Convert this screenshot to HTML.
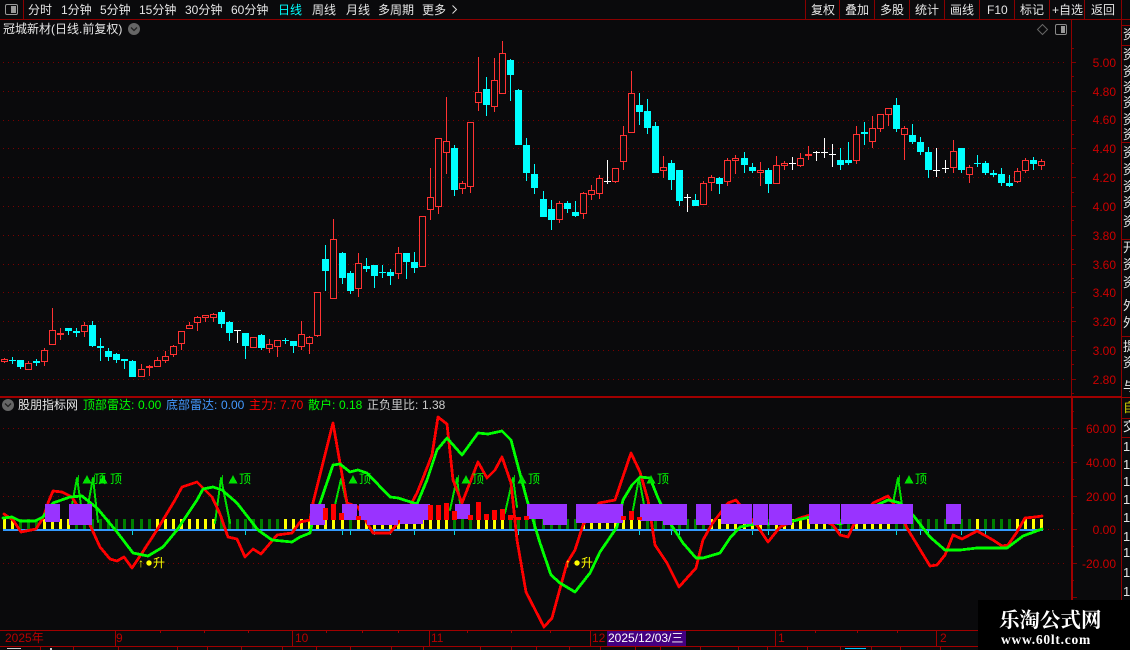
<!DOCTYPE html>
<html lang="zh"><head><meta charset="utf-8"><title>冠城新材</title>
<style>
html,body{margin:0;padding:0;background:#0a0a0c;}
#r{position:relative;width:1130px;height:650px;overflow:hidden;background:#0a0a0c;font:12px/14px "Liberation Sans","WenQuanYi Zen Hei","Noto Sans CJK SC",sans-serif;color:#e6e6e6;}
#r svg{position:absolute;left:0;top:0;shape-rendering:crispEdges;}
.t{position:absolute;white-space:nowrap;}
.g{color:#00ff00}.b{color:#4499ff}.e{color:#ff0000}.y{color:#ffff00}.a{color:#c00000}.d{color:#b80000;}
.rt{position:absolute;left:1075px;width:41px;text-align:right;color:#cc0000;}
.s{position:absolute;left:1123px;width:7px;overflow:hidden;white-space:nowrap;color:#e6e6e6;font-size:13px;}
</style></head><body><div id="r">
<svg id="c" width="1130" height="650" xmlns="http://www.w3.org/2000/svg"></svg>

<span class="t" style="left:28px;top:3px">分时</span>
<span class="t" style="left:61px;top:3px">1分钟</span>
<span class="t" style="left:100px;top:3px">5分钟</span>
<span class="t" style="left:139px;top:3px">15分钟</span>
<span class="t" style="left:185px;top:3px">30分钟</span>
<span class="t" style="left:231px;top:3px">60分钟</span>
<span class="t" style="left:278px;top:3px;color:#00ffff">日线</span>
<span class="t" style="left:312px;top:3px">周线</span>
<span class="t" style="left:346px;top:3px">月线</span>
<span class="t" style="left:378px;top:3px">多周期</span>
<span class="t" style="left:422px;top:3px">更多</span>

<span class="t" style="left:811px;top:3px">复权</span>
<span class="t" style="left:845px;top:3px">叠加</span>
<span class="t" style="left:880px;top:3px">多股</span>
<span class="t" style="left:915px;top:3px">统计</span>
<span class="t" style="left:950px;top:3px">画线</span>
<span class="t" style="left:987px;top:3px">F10</span>
<span class="t" style="left:1020px;top:3px">标记</span>
<span class="t" style="left:1052px;top:3px">+自选</span>
<span class="t" style="left:1091px;top:3px">返回</span>

<span class="t" style="left:3px;top:22px">冠城新材(日线.前复权)</span>

<span class="rt" style="top:56px">5.00</span>
<span class="rt" style="top:85px">4.80</span>
<span class="rt" style="top:113px">4.60</span>
<span class="rt" style="top:142px">4.40</span>
<span class="rt" style="top:171px">4.20</span>
<span class="rt" style="top:200px">4.00</span>
<span class="rt" style="top:229px">3.80</span>
<span class="rt" style="top:258px">3.60</span>
<span class="rt" style="top:286px">3.40</span>
<span class="rt" style="top:315px">3.20</span>
<span class="rt" style="top:344px">3.00</span>
<span class="rt" style="top:373px">2.80</span>

<span class="s" style="top:28px">资</span><span class="s" style="top:48px">资</span><span class="s" style="top:65px">资</span><span class="s" style="top:81px">资</span><span class="s" style="top:96px">资</span><span class="s" style="top:113px">资</span><span class="s" style="top:128px">资</span>
<span class="s" style="top:146px">资</span><span class="s" style="top:163px">资</span><span class="s" style="top:180px">资</span><span class="s" style="top:196px">资</span><span class="s" style="top:215px">资</span>
<span class="s" style="top:241px">开</span><span class="s" style="top:258px">资</span><span class="s" style="top:276px">资</span><span class="s" style="top:299px">外</span><span class="s" style="top:316px">外</span>
<span class="s" style="top:340px">提</span><span class="s" style="top:356px">资</span><span class="s" style="top:380px">与</span>
<span class="s y" style="top:401px;color:#cccc00">自</span><span class="s" style="top:420px">交</span>
<span class="s" style="top:440px">1</span><span class="s" style="top:458px">1</span><span class="s" style="top:475px">1</span><span class="s" style="top:493px">1</span><span class="s" style="top:511px">1</span><span class="s" style="top:530px">1</span><span class="s" style="top:546px">1</span><span class="s" style="top:566px">1</span><span class="s" style="top:585px">1</span>

<span class="t" style="left:18px;top:398px">股朋指标网</span>
<span class="t g" style="left:83px;top:398px">顶部雷达:</span><span class="t g" style="left:138px;top:398px">0.00</span>
<span class="t b" style="left:166px;top:398px">底部雷达:</span><span class="t b" style="left:221px;top:398px">0.00</span>
<span class="t e" style="left:249px;top:398px">主力:</span><span class="t e" style="left:280px;top:398px">7.70</span>
<span class="t g" style="left:308px;top:398px">散户:</span><span class="t g" style="left:339px;top:398px">0.18</span>
<span class="t" style="left:367px;top:398px;color:#ccc">正负里比:</span><span class="t" style="left:422px;top:398px;color:#ccc">1.38</span>

<span class="t g" style="left:94px;top:472px">顶</span><span class="t g" style="left:110px;top:472px">顶</span>
<span class="t g" style="left:239px;top:472px">顶</span><span class="t g" style="left:359px;top:472px">顶</span>
<span class="t g" style="left:472px;top:472px">顶</span><span class="t g" style="left:528px;top:472px">顶</span>
<span class="t g" style="left:657px;top:472px">顶</span><span class="t g" style="left:915px;top:472px">顶</span>
<span class="t y" style="left:138px;top:556px">↑</span><span class="t y" style="left:153px;top:556px">升</span>
<span class="t y" style="left:565px;top:556px">↑</span><span class="t y" style="left:581px;top:556px">升</span>

<span class="rt" style="left:1070px;width:46px;top:422px">60.00</span>
<span class="rt" style="left:1070px;width:46px;top:456px">40.00</span>
<span class="rt" style="left:1070px;width:46px;top:490px">20.00</span>
<span class="rt" style="left:1070px;width:46px;top:523px">0.00</span>
<span class="rt" style="left:1070px;width:46px;top:557px">-20.00</span>

<span class="t d" style="left:5px;top:631px">2025年</span>
<span class="t d" style="left:116px;top:631px">9</span>
<span class="t d" style="left:295px;top:631px">10</span>
<span class="t d" style="left:431px;top:631px">11</span>
<span class="t d" style="left:592px;top:631px">12</span>
<span class="t" style="left:608px;top:631px;color:#fff">2025/12/03/三</span>
<span class="t d" style="left:778px;top:631px">1</span>
<span class="t d" style="left:940px;top:631px">2</span>

<div style="position:absolute;left:978px;top:600px;width:152px;height:50px;background:#000"></div>
<span class="t" style="left:999px;top:609px;font:bold 20.5px/24px 'Liberation Serif','Noto Serif CJK SC',serif;color:#fff">乐淘公式网</span>
<span class="t" style="left:1001px;top:632px;font:bold 13.5px/15px 'Liberation Serif',serif;color:#fff;letter-spacing:.75px">www.60lt.com</span>
</div>
<script>
(function(){
var o=[];
function rc(x,y,w,h,f){o.push('<rect x="'+x+'" y="'+y+'" width="'+w+'" height="'+h+'" fill="'+f+'"/>');}
var L='#800000';
function dots(y,x2){o.push('<path d="M3 '+(y+.5)+'H'+x2+'" stroke="#7a0000" stroke-width="1" stroke-dasharray="1 4" fill="none"/>');}
var i,y;
for(i=0;i<12;i++){y=Math.round(62+28.8*i);dots(y,1068);rc(1071,y,5,1,L);rc(1071,Math.round(62+28.8*i+14.4),3,1,L);}
rc(1071,Math.round(62-14.4),3,1,L);
[428,462,496,529,563].forEach(function(v){dots(v,1068);});
for(i=-1;i<12;i++){y=Math.round(428+16.9*i);rc(1071,y,(i%2==0?6:3),1,L);}
rc(0,19,1122,1,'#8a0000');rc(23,0,1,19,'#8a0000');
[805,839,874,909,944,979,1014,1049,1084,1121].forEach(function(x){rc(x,0,1,19,'#8a0000');});
rc(1071,20,1,377,'#900000');rc(1071,397,2,233,'#a00000');
rc(1121,19,1,631,'#900000');rc(1122,19,8,1,'#900000');
[25,45,142,239,336,418,437].forEach(function(v){rc(1122,v,8,1,'#900000');});
rc(0,396,1122,2,'#a00000');
rc(1122,397,8,1,'#a00000');
rc(0,630,1122,1,'#a00000');rc(0,646,1122,1,'#a00000');
[115,292,429,590,775,936].forEach(function(x){rc(x,630,1,16,'#a00000');});
[160,204,248,326,362,398,467,511,550,815,857,897,1000,1040].forEach(function(x){rc(x,630,1,3,'#a00000');});
[40,73,118,177,207,241,282,316,350,391,423,480,511,536,569,600,635,660,700,738,767,807,840,871,900,940].forEach(function(x){rc(x,646,1,4,'#a00000');});
rc(607,631,79,15,'#430080');
rc(7,648,14,1,'#ccc');rc(50,648,2,2,'#ccc');rc(845,648,21,1,'#00c8ff');
var A=[['r',415,418,425,428],['c',411,420,423,431],['c',420,420,441,446],['r',424,430,449,449],['c',418,423,429,437],['r',385,391,425,437],['r',264,331,374,374],['f',324,340,344,360],['c',324,324,333,345],['c',324,333,339,351],['r',306,316,335,351],['c',304,315,378,381],['c',354,378,384,423],['c',384,393,411,423],['c',399,402,420,429],['c',417,417,423,447],['c',420,423,471,471],['r',432,448,471,471],['f',435,438,443,468],['r',411,421,440,441],['r',393,409,422,429],['r',376,379,404,411],['r',334,334,372,390],['r',306,316,327,327],['r',288,292,308,333],['r',286,286,293,306],['r',279,283,293,306],['c',270,276,312,324],['c',303,306,339,363],['w',330,331,333,369],['c',339,339,378,417],['r',351,352,384,384],['c',342,345,384,390],['r',357,373,386,399],['r',360,361,380,411],['c',354,360,363,372],['c',363,363,378,399],['r',303,343,380,390],['r',348,352,371,402],['r',217,217,347,351],['c',75,117,153,213],['r',-3,58,236,236],['c',96,99,174,192],['c',153,159,213,222],['r',99,130,206,231],['c',114,138,147,156],['c',135,135,168,204],['c',135,156,159,174],['c',147,156,168,195],['r',81,100,161,177],['c',99,99,126,177],['c',96,126,144,159]];
var B=[['r',559,559,710,710],['r',415,502,539,570],['r',325,325,530,552],['r',201,334,368,432],['c',345,354,480,498],['r',453,460,476,492],['r',277,277,470,489],['r',81,187,218,243],['c',141,177,225,258],['r',84,151,230,246],['r',33,70,191,192],['c',87,90,135,213],['c',177,180,345,345],['c',324,345,429,453],['c',402,432,474,492],['c',483,507,561,561],['c',510,537,570,600],['r',513,520,569,579],['c',513,519,537,549],['c',513,546,558,561],['r',486,490,551,567],['r',465,481,494,510],['r',435,445,491,507],['w',390,454,457,462],['r',414,415,455,459],['r',288,316,395,420],['r',123,190,308,308],['c',189,225,246,285],['c',207,243,294,312],['c',276,288,429,429],['r',378,412,422,444],['c',390,399,450,480],['c',420,420,513,528],['w',492,501,504,546],['c',492,510,528,528],['r',453,460,524,525],['r',435,442,460,483],['c',441,444,462,492],['r',384,391,455,468],['r',375,385,392,432]];
var C=[['c',186,205,225,249],['c',219,231,243,249],['r',216,241,250,288],['c',234,240,282,309],['r',198,226,281,282],['r',213,220,227,240],['w',201,219,221,240],['r',189,205,227,231],['f',168,192,197,210],['w',183,185,187,213],['w',144,186,188,204],['w',162,192,194,231],['c',174,210,225,240],['c',156,210,219,225],['r',108,133,212,222],['c',96,126,132,165],['r',78,115,155,174],['r',72,73,116,126],['r',54,55,74,108],['c',24,45,117,126],['r',108,115,134,210],['c',102,135,156,162],['c',141,156,186,195],['c',171,186,240,264],['w',174,240,243,261],['w',210,234,236,249],['r',150,184,233,249],['c',174,174,240,249],['r',225,232,254,279],['c',195,219,222,231],['c',213,219,249,255],['c',240,249,255,261],['c',234,252,279,288],['c',255,279,288,291],['r',234,244,275,279],['r',204,211,242,249],['c',201,210,222,240],['r',207,214,227,240]];
function X(i){return Math.floor(4.33+8.04*i);}
function draw(arr,start,y0){arr.forEach(function(d,k){
  var x=X(start+k),f=function(v){return Math.round(y0+v/3);};
  var col={r:'#ff3232',f:'#ff3232',c:'#00ffff',w:'#ffffff'}[d[0]];
  var wt=f(d[1]),bt=f(d[2]),bb=f(d[3]),wb=f(d[4]);
  rc(x,wt,1,Math.max(wb-wt,1),col);
  if(d[0]=='r'){
    o.push('<rect x="'+(x-2.5)+'" y="'+(bt+.5)+'" width="6" height="'+Math.max(bb-bt-1,1)+'" fill="#0a0a0c" stroke="'+col+'" stroke-width="1"/>');
  }else if(d[0]=='w'){rc(x-3,bt,7,1,col);}
  else{rc(x-3,bt,7,Math.max(bb-bt,1),col);}
});}
draw(A,0,220);draw(B,52,30);draw(C,92,90);
var Y=[0,1,5,6,7,8];function rg(a,b){for(var j=a;j<=b;j++)Y.push(j);}
rg(19,26);rg(35,42);rg(44,55);rg(59,62);rg(72,79);rg(88,94);rg(96,102);rg(106,110);Y.push(121);rg(126,129);
for(i=0;i<130;i++){var x=X(i);rc(x-1,519,3,10,Y.indexOf(i)>=0?'#ffff00':'#008000');}
[16,30,42,43,46,48,51,56,64,79,83,84,93,95,104,111,114,115,119,122].forEach(function(k){rc(X(k),530,1,5,'#00dcdc');});
rc(3,529,1040,2,'#3399ff');
function pl(p,c,w){o.push('<polyline points="'+p+'" fill="none" stroke="'+c+'" stroke-width="'+w+'" stroke-linejoin="round" stroke-linecap="round"/>');}
['72,505 77,478 81,505','88,505 93,478 98,522','215,523 221,478 230,523','335,505 341,479 347,505','450,510 457,478 460,503','505,513 513,478 517,507','633,510 639,478 645,510','893,503 898,478 902,505'].forEach(function(p){pl(p,'#00e000',2);});
pl('4,514 13,520 21,532 36,529 43,518 48,503 53,491 62,492 72,497 80,510 90,525 100,547 110,559 117,561 124,557 132,568 142,553 157,530 175,500 182,487 197,482 212,497 220,514 228,537 237,539 245,557 253,549 261,554 277,535 292,533 300,522 310,520 313,503 333,423 347,503 358,507 373,533 390,533 400,520 408,510 417,493 423,478 432,455 438,417 447,424 453,480 462,503 478,462 487,478 495,470 502,457 511,483 517,540 526,592 544,627 552,618 567,563 575,550 583,525 599,503 615,500 631,453 640,472 648,500 655,545 667,563 679,587 687,578 696,568 703,540 712,524 728,503 736,500 748,515 758,527 768,542 780,527 800,518 810,515 833,525 840,535 848,537 855,522 873,503 888,496 900,513 907,528 930,566 937,565 945,555 953,535 962,539 977,531 993,540 1002,546 1008,545 1017,532 1025,518 1035,517 1042,516','#ff0000',2.8);
pl('3,518 12,517 20,521 35,521 43,517 53,503 70,497 82,496 97,508 117,532 133,553 148,556 163,547 177,530 197,500 203,489 213,487 222,490 237,503 258,530 272,540 292,542 300,537 310,533 313,520 320,503 333,465 340,464 350,472 358,470 367,473 390,497 398,498 417,504 427,480 437,450 447,438 462,455 478,433 488,434 502,431 511,440 527,500 540,543 551,575 560,583 575,592 590,573 600,552 617,527 623,500 632,485 640,477 650,478 658,498 670,523 683,543 696,558 703,558 720,553 730,538 740,527 760,523 768,524 793,521 810,517 840,524 860,517 877,505 888,500 900,503 913,515 930,537 945,550 960,550 977,548 1007,548 1023,536 1042,529','#00ff00',2.8);
[[45,504,15,18],[69,504,23,21],[310,504,15,21],[342,504,15,16],[359,504,71,16],[367,504,31,21],[400,504,23,20],[455,504,15,15],[527,504,40,15],[543,504,24,21],[576,504,47,19],[640,504,47,17],[663,504,24,21],[696,504,15,21],[721,504,31,20],[753,504,15,21],[769,504,23,21],[809,504,31,20],[841,504,72,20],[946,504,15,20]].forEach(function(b){rc(b[0],b[1],b[2],b[3],'#9933ff');});
[[323,508],[331,504],[339,513],[356,516],[428,505],[436,505],[444,503],[452,511],[468,515],[476,502],[484,514],[492,510],[500,509],[508,515],[516,517],[524,516],[621,516],[629,511],[637,517]].forEach(function(b){rc(b[0],b[1],5,520-b[1],'#ff0000');});
[87,103,233,353,466,522,651,909].forEach(function(x){o.push('<polygon points="'+(x-4.5)+',483.5 '+(x+4.5)+',483.5 '+x+',475" fill="#00e000"/>');});
[77,93,221,457,513,898].forEach(function(x){rc(x+1,475,1,7,'#00c000');});
var g='';
[149,577].forEach(function(x){g+='<circle cx="'+x+'" cy="563" r="2.7" fill="#ffff00"/>';});
g+='<rect x="5.5" y="4.5" width="12" height="10" rx="1.5" fill="none" stroke="#999"/><rect x="11" y="6" width="5" height="7" fill="#999"/>';
g+='<path d="M452.5 5.5L456.5 9.5L452.5 13.5" fill="none" stroke="#ddd"/>';
g+='<circle cx="134" cy="29" r="6" fill="#666"/><path d="M131 27.5L134 30.5L137 27.5" fill="none" stroke="#222" stroke-width="1.3"/>';
g+='<circle cx="8" cy="405" r="6" fill="#666"/><path d="M5 403.5L8 406.5L11 403.5" fill="none" stroke="#222" stroke-width="1.3"/>';
g+='<path d="M1042.5 24.5L1047.5 29.5L1042.5 34.5L1037.5 29.5Z" fill="none" stroke="#666"/>';
g+='<rect x="1055.5" y="24.5" width="11" height="10" rx="1.5" fill="none" stroke="#888"/><rect x="1061" y="26" width="4" height="7" fill="#999"/>';
o.push('<g style="shape-rendering:auto">'+g+'</g>');
document.getElementById('c').innerHTML=o.join('');
})();
</script>
</body></html>
